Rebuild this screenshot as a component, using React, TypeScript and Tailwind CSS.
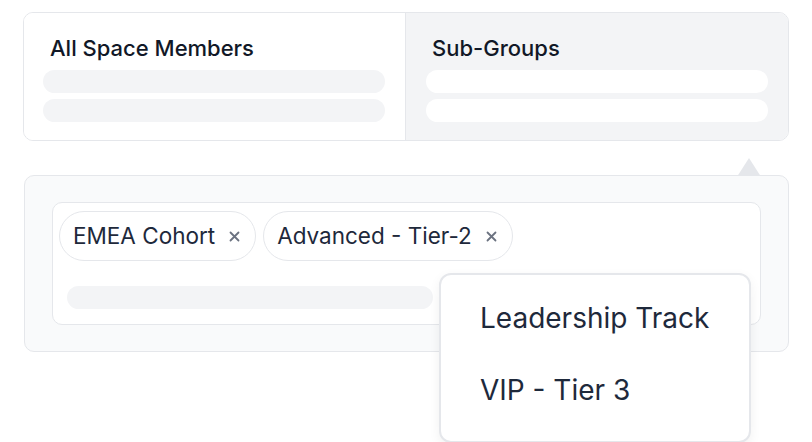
import React from "react";

function XIcon() {
  return (
    <svg width="11" height="11" viewBox="0 0 11 11" className="shrink-0">
      <path d="M1.5 1.5 L9.5 9.5 M9.5 1.5 L1.5 9.5" stroke="#6b7280" strokeWidth="1.8" strokeLinecap="round" />
    </svg>
  );
}

function Chip({ label }: { label: string }) {
  return (
    <div className="flex h-[50px] items-center gap-[14px] rounded-full border border-[#e5e7eb] bg-white pl-[13px] pr-[15px]">
      <span className="text-[22.5px] text-[#1e293b]">{label}</span>
      <XIcon />
    </div>
  );
}

export default function App() {
  return (
    <div
      className="relative h-[442px] w-[812px] overflow-hidden bg-white pl-[23px] pt-[12px]"
      style={{ fontFamily: "Inter, 'Noto Sans', sans-serif" }}
    >
      {/* Top tabs card */}
      <div className="grid h-[129px] w-[766px] grid-cols-[382px_1fr] overflow-hidden rounded-[10px] border border-[#e5e7eb]">
        <div className="flex flex-col border-r border-[#e5e7eb] bg-white pl-[19px] pr-[20px] pt-[21px]">
          <div className="pl-[7px] text-[22px] font-medium leading-[28px] text-[#111827]">All Space Members</div>
          <div className="mt-[8px] h-[23px] rounded-full bg-[#f3f4f6]" />
          <div className="mt-[6px] h-[23px] rounded-full bg-[#f3f4f6]" />
        </div>
        <div className="flex flex-col bg-[#f3f4f6] pl-[20px] pr-[20px] pt-[21px]">
          <div className="pl-[6px] text-[22px] font-medium leading-[28px] text-[#111827]">Sub-Groups</div>
          <div className="mt-[8px] h-[23px] rounded-full bg-white" />
          <div className="mt-[6px] h-[23px] rounded-full bg-white" />
        </div>
      </div>

      {/* Lower panel */}
      <div className="relative ml-[1px] mt-[34px] w-[765px] rounded-[10px] border border-[#e5e7eb] bg-[#f9fafb] p-[26px] pl-[27px]">
        <svg className="absolute right-[26px] top-[-19px]" width="26" height="19" viewBox="0 0 26 19">
          <path d="M13 1 L24.5 19 L1.5 19 Z" fill="#e5e7eb" />
        </svg>
        <div className="h-[123px] w-[709px] rounded-[10px] border border-[#e5e7eb] bg-white pl-[6px] pt-[8px]">
          <div className="flex gap-[7px]">
            <Chip label="EMEA Cohort" />
            <Chip label="Advanced - Tier-2" />
          </div>
          <div className="ml-[8px] mt-[25px] h-[23px] w-[366px] rounded-full bg-[#f3f4f6]" />
        </div>
      </div>

      {/* Dropdown */}
      <div className="absolute left-[439px] top-[273px] h-[170px] w-[312px] rounded-[12px] border-2 border-[#e5e7eb] bg-white shadow-[0_4px_12px_rgba(0,0,0,0.06)]">
        <div className="flex flex-col pl-[39px] pt-[21px]">
          <div className="flex h-[44px] items-center text-[28px] text-[#1e293b]">Leadership Track</div>
          <div className="mt-[28px] flex h-[44px] items-center text-[28px] text-[#1e293b]">VIP - Tier 3</div>
        </div>
      </div>
    </div>
  );
}
